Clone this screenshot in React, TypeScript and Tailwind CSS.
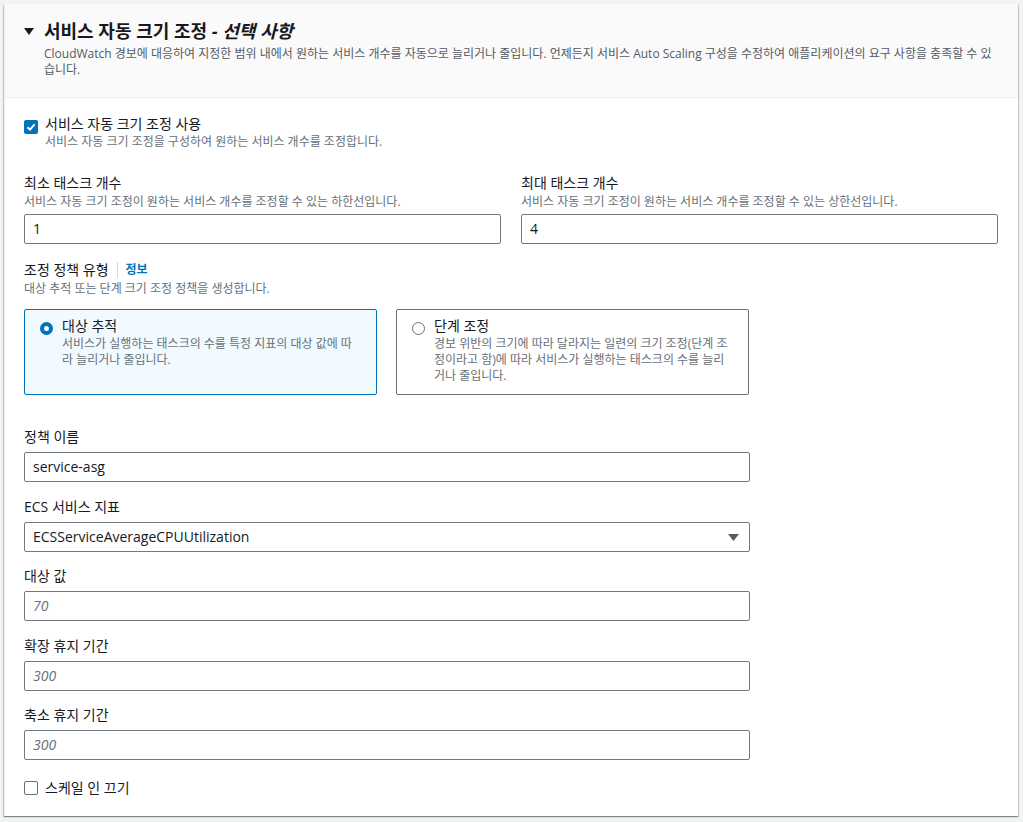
import React from "react";

const font = "font-['Open_Sans','Noto_Sans_CJK_KR',sans-serif]";

function Checkbox({ checked }: { checked?: boolean }) {
	if (checked) {
		return (
			<span className="flex h-[14px] w-[14px] shrink-0 items-center justify-center rounded-[2px] bg-[#0073bb]">
				<svg width="10" height="10" viewBox="0 0 10 10">
					<path d="M1.5 5.2 L4 7.6 L8.6 2.4" fill="none" stroke="#fff" strokeWidth="2" />
				</svg>
			</span>
		);
	}
	return <span className="block h-[14px] w-[14px] shrink-0 rounded-[2px] border border-[#687078] bg-white" />;
}

function Radio({ checked }: { checked?: boolean }) {
	return checked ? (
		<span className="mt-[6px] block h-[13px] w-[13px] shrink-0 rounded-full border-[4px] border-[#0073bb] bg-white" />
	) : (
		<span className="mt-[6px] block h-[13px] w-[13px] shrink-0 rounded-full border border-[#687078] bg-white" />
	);
}

function TextInput({ value, placeholder }: { value?: string; placeholder?: string }) {
	return (
		<div className="flex h-[30px] items-center rounded-[2px] border border-[#6f7b84] bg-white px-2 text-sm">
			{value ? (
				<span className="text-[#16191f]">{value}</span>
			) : (
				<span className="italic text-[#687078]">{placeholder}</span>
			)}
		</div>
	);
}

function Field({ label, children }: { label: string; children: React.ReactNode }) {
	return (
		<div className="flex flex-col gap-[5px]">
			<div className="text-sm leading-5 text-[#16191f]">{label}</div>
			{children}
		</div>
	);
}

function RadioCard({
	checked,
	title,
	lines,
}: {
	checked?: boolean;
	title: string;
	lines: string[];
}) {
	return (
		<div
			className={
				checked
					? "flex h-[86px] w-[353px] gap-[9px] rounded-[2px] border border-[#0073bb] bg-[#f1faff] pl-[15px] pt-[6px]"
					: "flex h-[86px] w-[353px] gap-[9px] rounded-[2px] border border-[#687078] bg-white pl-[15px] pt-[6px]"
			}
		>
			<Radio checked={checked} />
			<div>
				<div className="text-sm leading-5 text-[#16191f]">{title}</div>
				<div className="whitespace-nowrap text-xs leading-4 text-[#687078]">
					{lines.map((l) => (
						<div key={l}>{l}</div>
					))}
				</div>
			</div>
		</div>
	);
}

export default function App() {
	return (
		<div className={`min-h-screen bg-[#f2f3f3] p-1 ${font}`}>
			<div className="w-[1014px] border-l border-[#eaeded] bg-white shadow-[0_1px_1px_0_rgba(0,28,36,0.3),1px_1px_1px_0_rgba(0,28,36,0.15),-1px_1px_1px_0_rgba(0,28,36,0.15)]">
				<div className="border-b border-[#eaeded] bg-[#fafafa] pb-[19px] pl-[19px] pr-5 pt-4">
					<div className="flex items-center gap-[10px]">
						<svg width="10" height="7" viewBox="0 0 10 7">
							<path d="M0 0 H10 L5 7 Z" fill="#16191f" />
						</svg>
						<h2 className="text-[18px] font-bold leading-[22px] text-[#16191f]">
							서비스 자동 크기 조정 <i>- 선택 사항</i>
						</h2>
					</div>
					<p className="mt-1 pl-5 text-xs leading-4 text-[#545b64]">
						<span className="whitespace-nowrap">
							CloudWatch 경보에 대응하여 지정한 범위 내에서 원하는 서비스 개수를 자동으로 늘리거나 줄입니다. 언제든지 서비스 Auto Scaling 구성을 수정하여 애플리케이션의 요구 사항을 충족할 수 있
						</span>
						<br />
						습니다.
					</p>
				</div>

				<div className="pb-[18px] pl-[19px] pr-5 pt-4">
					<div className="flex gap-[7px]">
						<div className="pt-[6px]">
							<Checkbox checked />
						</div>
						<div>
							<div className="text-sm leading-5 text-[#16191f]">서비스 자동 크기 조정 사용</div>
							<div className="text-xs leading-4 text-[#687078]">서비스 자동 크기 조정을 구성하여 원하는 서비스 개수를 조정합니다.</div>
						</div>
					</div>

					<div className="mt-[23px] grid grid-cols-2 gap-x-5">
						<div>
							<div className="text-sm leading-5 text-[#16191f]">최소 태스크 개수</div>
							<div className="mt-px text-xs leading-4 text-[#687078]">서비스 자동 크기 조정이 원하는 서비스 개수를 조정할 수 있는 하한선입니다.</div>
							<div className="mt-[4px]">
								<TextInput value="1" />
							</div>
						</div>
						<div>
							<div className="text-sm leading-5 text-[#16191f]">최대 태스크 개수</div>
							<div className="mt-px text-xs leading-4 text-[#687078]">서비스 자동 크기 조정이 원하는 서비스 개수를 조정할 수 있는 상한선입니다.</div>
							<div className="mt-[4px]">
								<TextInput value="4" />
							</div>
						</div>
					</div>

					<div className="mt-[16px]">
						<div className="flex items-center text-sm leading-5 text-[#16191f]">
							조정 정책 유형
							<span className="mx-[8px] h-[16px] w-px bg-[#d5dbdb]" />
							<span className="text-xs font-bold text-[#0073bb]">정보</span>
						</div>
						<div className="mt-px text-xs leading-4 text-[#687078]">대상 추적 또는 단계 크기 조정 정책을 생성합니다.</div>
					</div>

					<div className="mt-[12px] flex gap-[19px]">
						<RadioCard
							checked
							title="대상 추적"
							lines={["서비스가 실행하는 태스크의 수를 특정 지표의 대상 값에 따", "라 늘리거나 줄입니다."]}
						/>
						<RadioCard
							title="단계 조정"
							lines={[
								"경보 위반의 크기에 따라 달라지는 일련의 크기 조정(단계 조",
								"정이라고 함)에 따라 서비스가 실행하는 태스크의 수를 늘리",
								"거나 줄입니다.",
							]}
						/>
					</div>

					<div className="mt-[32px] flex w-[726px] flex-col gap-[14px]">
						<Field label="정책 이름">
							<TextInput value="service-asg" />
						</Field>
						<div className="mt-px">
							<Field label="ECS 서비스 지표">
								<div className="flex h-[30px] items-center justify-between rounded-[2px] border border-[#6f7b84] bg-white pl-2 pr-[10px] text-sm text-[#16191f]">
									<span>ECSServiceAverageCPUUtilization</span>
									<svg width="11" height="7" viewBox="0 0 11 7">
										<path d="M0 0 H11 L5.5 7 Z" fill="#545b64" />
									</svg>
								</div>
							</Field>
						</div>
						<Field label="대상 값">
							<TextInput placeholder="70" />
						</Field>
						<div className="mt-px">
							<Field label="확장 휴지 기간">
								<TextInput placeholder="300" />
							</Field>
						</div>
						<Field label="축소 휴지 기간">
							<TextInput placeholder="300" />
						</Field>
					</div>

					<div className="mt-[18px] flex items-center gap-[7px]">
						<Checkbox />
						<span className="text-sm leading-5 text-[#16191f]">스케일 인 끄기</span>
					</div>
				</div>
			</div>
		</div>
	);
}
